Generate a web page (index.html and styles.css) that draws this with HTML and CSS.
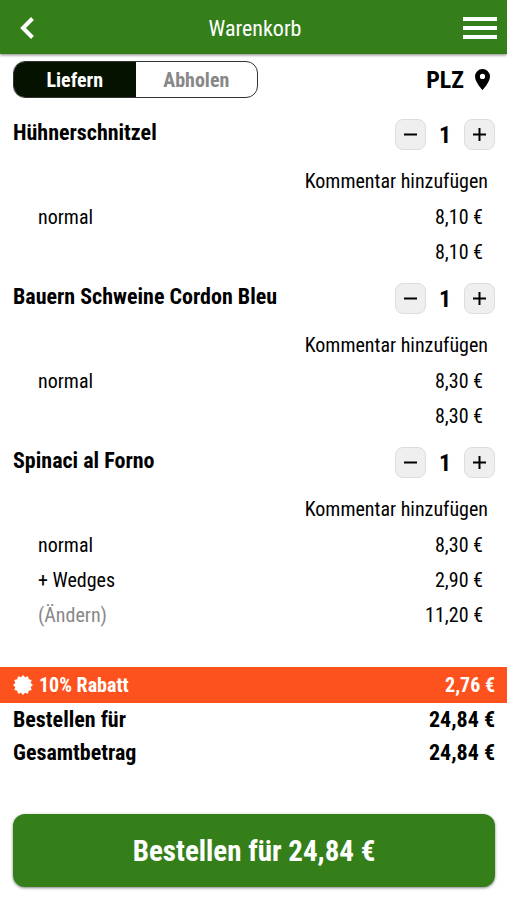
FILE: index.html
```html
<!DOCTYPE html>
<html lang="de">
<head>
  <meta charset="utf-8">
  <meta name="viewport" content="width=device-width, initial-scale=1">
  <title>Warenkorb</title>
  <link rel="stylesheet" href="styles.css">
</head>
<body>
  <header class="topbar">
    <button type="button" class="icon-button" aria-label="Zurück">
      <svg width="30" height="30" viewBox="0 0 30 30"><path d="M19.500 5.500 10 15l9.500 9.500" fill="none" stroke="#fff" stroke-width="4"/></svg>
    </button>
    <h1 class="topbar-title">Warenkorb</h1>
    <button type="button" class="icon-button" aria-label="Menü">
      <svg width="34" height="24" viewBox="0 0 34 24"><path d="M0 3h34M0 12h34M0 21h34" stroke="#fff" stroke-width="4"/></svg>
    </button>
  </header>

  <main>
    <div class="options">
      <div class="switch">
        <button type="button" class="switch-button active" aria-pressed="true">Liefern</button>
        <button type="button" class="switch-button" aria-pressed="false">Abholen</button>
      </div>
      <button type="button" class="plz">PLZ
        <svg width="15" height="21" viewBox="0 0 15 21"><path fill-rule="evenodd" d="M7.500 0A7.400 7.400 0 0 0 0 7.400C0 13 7.500 21 7.500 21S15 13 15 7.400A7.400 7.400 0 0 0 7.500 0Zm0 4.800a2.600 2.600 0 1 1 0 5.200 2.600 2.600 0 0 1 0-5.200Z"/></svg>
      </button>
    </div>

    <section class="item">
      <div class="item-head">
        <h2 class="item-name">Hühnerschnitzel</h2>
        <div class="stepper">
          <button type="button" class="step" aria-label="Weniger"><svg width="13" height="13" viewBox="0 0 13 13"><path d="M0 6.500h13"/></svg></button>
          <span class="count">1</span>
          <button type="button" class="step" aria-label="Mehr"><svg width="13" height="13" viewBox="0 0 13 13"><path d="M0 6.500h13M6.500 0v13"/></svg></button>
        </div>
      </div>
      <a href="#" class="comment">Kommentar hinzufügen</a>
      <div class="line"><span>normal</span><span>8,10 €</span></div>
      <div class="line"><span></span><span>8,10 €</span></div>
    </section>

    <section class="item">
      <div class="item-head">
        <h2 class="item-name">Bauern Schweine Cordon Bleu</h2>
        <div class="stepper">
          <button type="button" class="step" aria-label="Weniger"><svg width="13" height="13" viewBox="0 0 13 13"><path d="M0 6.500h13"/></svg></button>
          <span class="count">1</span>
          <button type="button" class="step" aria-label="Mehr"><svg width="13" height="13" viewBox="0 0 13 13"><path d="M0 6.500h13M6.500 0v13"/></svg></button>
        </div>
      </div>
      <a href="#" class="comment">Kommentar hinzufügen</a>
      <div class="line"><span>normal</span><span>8,30 €</span></div>
      <div class="line"><span></span><span>8,30 €</span></div>
    </section>

    <section class="item">
      <div class="item-head">
        <h2 class="item-name">Spinaci al Forno</h2>
        <div class="stepper">
          <button type="button" class="step" aria-label="Weniger"><svg width="13" height="13" viewBox="0 0 13 13"><path d="M0 6.500h13"/></svg></button>
          <span class="count">1</span>
          <button type="button" class="step" aria-label="Mehr"><svg width="13" height="13" viewBox="0 0 13 13"><path d="M0 6.500h13M6.500 0v13"/></svg></button>
        </div>
      </div>
      <a href="#" class="comment">Kommentar hinzufügen</a>
      <div class="line"><span>normal</span><span>8,30 €</span></div>
      <div class="line"><span>+ Wedges</span><span>2,90 €</span></div>
      <div class="line"><a href="#" class="edit">(Ändern)</a><span>11,20 €</span></div>
    </section>

    <div class="discount">
      <svg width="20" height="20" viewBox="-10 -10 20 20"><path fill="#fff" d="M0-10 2-7.700 5-8.700 5.700-5.700 8.700-5 7.700-2 10 0 7.700 2 8.700 5 5.700 5.700 5 8.700 2 7.700 0 10-2 7.700-5 8.700-5.700 5.700-8.700 5-7.700 2-10 0-7.700-2-8.700-5-5.700-5.700-5-8.700-2-7.700z"/></svg>
      <span>10% Rabatt</span>
      <span class="discount-value">2,76 €</span>
    </div>
    <div class="total"><span>Bestellen für</span><span>24,84 €</span></div>
    <div class="total"><span>Gesamtbetrag</span><span>24,84 €</span></div>

    <button type="button" class="order">Bestellen für 24,84 €</button>
  </main>
</body>
</html>
```
FILE: styles.css
```css
* {
  box-sizing: border-box;
}

body {
  margin: 0;
  background: #fff;
  color: #000;
  font-family: "Roboto Condensed", Roboto, sans-serif;
  font-size: 20px;
}

button {
  border: none;
  padding: 0;
  background: none;
  color: inherit;
  font: inherit;
  cursor: pointer;
}

a {
  color: inherit;
  text-decoration: none;
}

h1, h2 {
  margin: 0;
}

/* Header */
.topbar {
  display: grid;
  grid-template-columns: 1fr auto 1fr;
  align-items: center;
  height: 54px;
  padding: 2px 10px 0 13px;
  background: #357f1b;
  color: #fff;
  box-shadow: 0 1px 3px rgba(0, 0, 0, 0.5);
}

.topbar-title {
  font-size: 22px;
  font-weight: 400;
}

.icon-button {
  display: flex;
}

.icon-button:last-child {
  justify-self: end;
}

/* Delivery options */
.options {
  display: flex;
  justify-content: space-between;
  align-items: center;
  padding: 7px 12px 0 13px;
}

.switch {
  display: flex;
  width: 245px;
  height: 37px;
  border: 1px solid #333;
  border-radius: 12px;
  overflow: hidden;
}

.switch-button {
  flex: 1;
  color: #888;
  font-weight: 700;
}

.switch-button.active {
  background: #061200;
  color: #fff;
}

.plz {
  display: flex;
  align-items: center;
  gap: 11px;
  padding-right: 5px;
  font-size: 24px;
  font-weight: 700;
}

/* Cart items */
.item {
  padding: 21px 12px 0 13px;
}

.item + .item {
  padding-top: 13px;
}

.item-head {
  display: flex;
  justify-content: space-between;
  height: 31px;
  margin-bottom: 12px;
}

.item-name {
  font-size: 22px;
  line-height: 28px;
}

.stepper {
  display: flex;
  align-items: center;
}

.step {
  display: flex;
  align-items: center;
  justify-content: center;
  width: 31px;
  height: 31px;
  border: 1px solid #ddd;
  border-radius: 8px;
  background: #efefef;
}

.step svg {
  stroke: #000;
  stroke-width: 2;
}

.count {
  width: 38px;
  text-align: center;
  font-size: 24px;
  font-weight: 700;
}

.comment {
  display: block;
  padding-right: 7px;
  line-height: 38px;
  text-align: right;
}

.line {
  display: flex;
  justify-content: space-between;
  padding: 0 12px 0 25px;
  line-height: 35px;
}

.edit {
  color: #888;
}

/* Totals */
.discount {
  display: flex;
  align-items: center;
  gap: 6px;
  height: 36px;
  margin-top: 34px;
  padding: 0 12px 0 13px;
  background: #fd521d;
  color: #fff;
  font-weight: 700;
}

.discount-value {
  margin-left: auto;
}

.total {
  display: flex;
  justify-content: space-between;
  padding: 0 12px 0 13px;
  font-size: 22px;
  font-weight: 700;
  line-height: 33px;
}

.order {
  display: block;
  width: calc(100% - 25px);
  height: 73px;
  margin: 45px 12px 13px 13px;
  border-radius: 12px;
  background: #357f1b;
  color: #fff;
  font-size: 29px;
  font-weight: 700;
  box-shadow: 0 1px 3px rgba(0, 0, 0, 0.5);
}
```
